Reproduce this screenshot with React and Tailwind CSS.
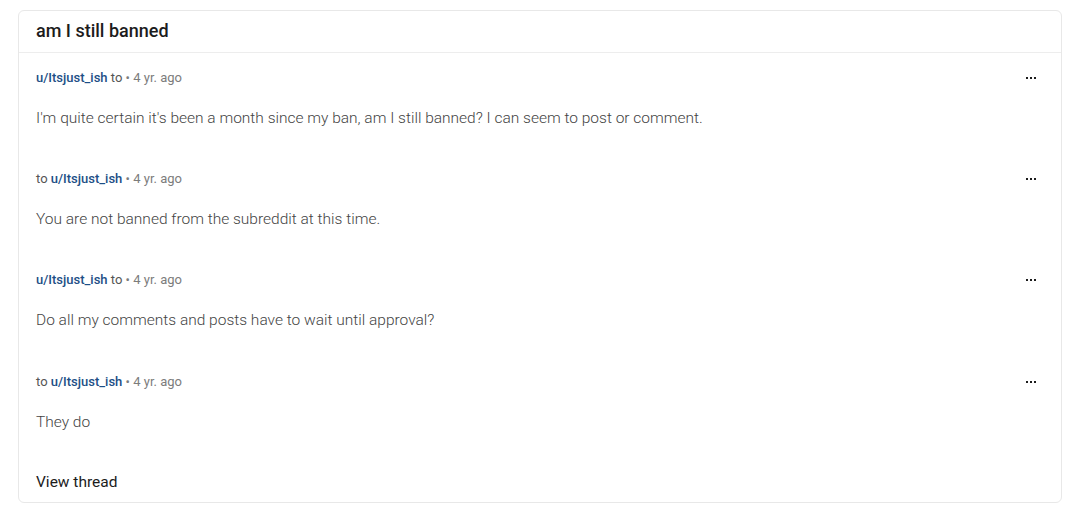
import React from 'react';

const messages = [
  { fromMe: true, time: '4 yr. ago', body: "I'm quite certain it's been a month since my ban, am I still banned? I can seem to post or comment." },
  { fromMe: false, time: '4 yr. ago', body: 'You are not banned from the subreddit at this time.' },
  { fromMe: true, time: '4 yr. ago', body: 'Do all my comments and posts have to wait until approval?' },
  { fromMe: false, time: '4 yr. ago', body: 'They do' },
];

function Dots() {
  return (
    <button className="flex items-center gap-[2px] px-1 h-4" aria-label="More options">
      <span className="w-[2px] h-[2px] bg-[#1c1c1c]" />
      <span className="w-[2px] h-[2px] bg-[#1c1c1c]" />
      <span className="w-[2px] h-[2px] bg-[#1c1c1c]" />
    </button>
  );
}

function Message({ msg, last }) {
  const user = <span className="text-[#1d4f86] font-medium">u/Itsjust_ish</span>;
  return (
    <div className={last ? 'pt-[17px] pb-[27px]' : 'pt-[17px] pb-[26px]'}>
      <div className="flex items-center justify-between h-4 text-[13px] leading-4">
        <div className="text-[#555]">
          {msg.fromMe ? (
            <>
              {user} <span>to</span>
            </>
          ) : (
            <>
              <span>to</span> {user}
            </>
          )}
          <span className="text-[#7c7c7c]"> • {msg.time}</span>
        </div>
        <div className="mr-[4px]">
          <Dots />
        </div>
      </div>
      <p className="mt-[22px] text-[15.5px] leading-5 font-light text-[#444]">{msg.body}</p>
    </div>
  );
}

export default function App() {
  return (
    <div className="min-h-screen bg-white pt-[10px] px-[18px]" style={{ fontFamily: 'Roboto, "Noto Sans", sans-serif' }}>
      <div className="border border-[#e8e8e8] rounded-[6px] bg-white">
        <div className="border-b border-[#ededed] px-[17px] pt-2 pb-[9px]">
          <h1 className="text-lg leading-6 font-medium text-[#1c1c1c]">am I still banned</h1>
        </div>
        <div className="px-[17px]">
          {messages.map((m, i) => (
            <Message key={i} msg={m} last={i === 2} />
          ))}
          <div className="pt-[14px] pb-[10px] text-[15.5px] leading-5 text-[#1c1c1c]">
            View thread
          </div>
        </div>
      </div>
    </div>
  );
}
